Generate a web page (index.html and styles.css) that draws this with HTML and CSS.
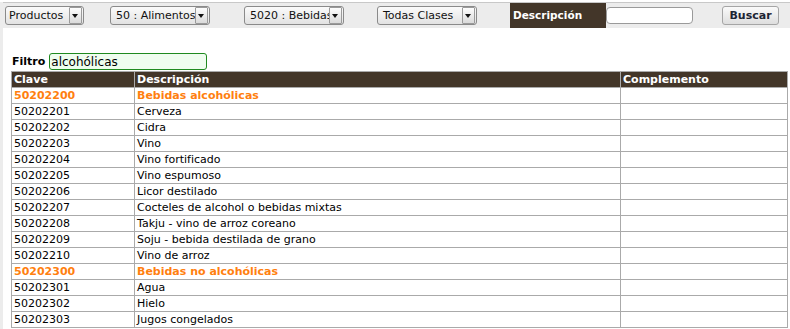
FILE: index.html
```html
<!DOCTYPE html>
<html lang="es">
<head>
    <meta charset="UTF-8">
    <title>Catálogo de productos</title>
    <link rel="stylesheet" href="styles.css">
</head>
<body>
    <div class="page">
        <div class="toolbar">
            <span class="combo w-prod"><span class="combo-text">Productos</span><span class="combo-btn"></span></span>
            <span class="combo w-seg"><span class="combo-text">50 : Alimentos</span><span class="combo-btn"></span></span>
            <span class="combo w-fam"><span class="combo-text">5020 : Bebidas</span><span class="combo-btn"></span></span>
            <span class="combo w-cla"><span class="combo-text">Todas Clases</span><span class="combo-btn"></span></span>
            <span class="search-label">Descripción</span>
            <input type="text" class="search-input">
            <button class="btn">Buscar</button>
        </div>

        <div class="content">
            <div class="filter">
                <label for="filtro">Filtro</label>
                <input type="text" id="filtro" value="alcohólicas">
            </div>

            <table class="grid">
                <thead>
                    <tr><th class="c1">Clave</th><th class="c2">Descripción</th><th class="c3">Complemento</th></tr>
                </thead>
                <tbody>
                    <tr class="group"><td>50202200</td><td>Bebidas alcohólicas</td><td></td></tr>
                    <tr><td>50202201</td><td>Cerveza</td><td></td></tr>
                    <tr><td>50202202</td><td>Cidra</td><td></td></tr>
                    <tr><td>50202203</td><td>Vino</td><td></td></tr>
                    <tr><td>50202204</td><td>Vino fortificado</td><td></td></tr>
                    <tr><td>50202205</td><td>Vino espumoso</td><td></td></tr>
                    <tr><td>50202206</td><td>Licor destilado</td><td></td></tr>
                    <tr><td>50202207</td><td>Cocteles de alcohol o bebidas mixtas</td><td></td></tr>
                    <tr><td>50202208</td><td>Takju - vino de arroz coreano</td><td></td></tr>
                    <tr><td>50202209</td><td>Soju - bebida destilada de grano</td><td></td></tr>
                    <tr><td>50202210</td><td>Vino de arroz</td><td></td></tr>
                    <tr class="group"><td>50202300</td><td>Bebidas no alcohólicas</td><td></td></tr>
                    <tr><td>50202301</td><td>Agua</td><td></td></tr>
                    <tr><td>50202302</td><td>Hielo</td><td></td></tr>
                    <tr><td>50202303</td><td>Jugos congelados</td><td></td></tr>
                </tbody>
            </table>
        </div>
    </div>
</body>
</html>
```

FILE: styles.css
```css
body {
    margin: 0;
    font-family: "DejaVu Sans", Verdana, sans-serif;
    font-size: 11px;
    color: #000;
    background: #fff;
}

.page {
    border-left: 3px solid #ececec;
    min-height: 100vh;
    box-sizing: border-box;
}

/* barra superior */
.toolbar {
    display: flex;
    align-items: center;
    height: 25px;
    margin-top: 2px;
    border-top: 1px solid #c8c8c8;
    background: #ececec;
    padding-left: 2px;
}

.combo {
    display: flex;
    align-items: center;
    box-sizing: border-box;
    height: 19px;
    border: 1px solid #8a8a8a;
    border-radius: 3px;
    background: linear-gradient(#fbfbfb, #e2e2e2);
    overflow: hidden;
}

.combo-text {
    flex: 1;
    padding-left: 5px;
    white-space: nowrap;
    overflow: hidden;
    color: #111;
}

.combo-btn {
    position: relative;
    width: 11px;
    height: 15px;
    margin-right: 1px;
    border: 1px solid #9a9a9a;
    border-radius: 1px;
    background: linear-gradient(#fdfdfd, #dadada);
    flex: none;
}

.combo-btn::after {
    content: "";
    position: absolute;
    left: 2px;
    top: 6px;
    border-left: 3px solid transparent;
    border-right: 3px solid transparent;
    border-top: 4px solid #111;
}

.w-prod { width: 79px; }
.w-prod .combo-text { padding-left: 3px; }
.w-seg { width: 100px; margin-left: 26px; }
.w-fam { width: 100px; margin-left: 34px; }
.w-cla { width: 100px; margin-left: 33px; }

.search-label {
    margin-left: 33px;
    width: 93px;
    height: 25px;
    line-height: 25px;
    padding-left: 3px;
    background: #433629;
    color: #fff;
    font-weight: bold;
    font-size: 10.5px;
}

.search-input {
    box-sizing: border-box;
    width: 87px;
    height: 17px;
    margin: 0;
    border: 1px solid #9a9a9a;
    border-radius: 4px;
    background: #fff;
}

.btn {
    box-sizing: border-box;
    margin-left: 29px;
    width: 57px;
    height: 19px;
    padding: 0;
    border: 1px solid #a5a5a5;
    border-radius: 3px;
    background: linear-gradient(#fafafa, #dedede);
    font-family: "DejaVu Sans", Verdana, sans-serif;
    font-size: 11px;
    font-weight: bold;
    color: #1c2433;
}

/* contenido */
.content {
    padding: 25px 0 0 8px;
}

.filter {
    display: flex;
    align-items: center;
    gap: 4px;
    margin-left: 1px;
}

.filter label {
    font-weight: bold;
}

.filter input {
    box-sizing: border-box;
    width: 158px;
    height: 17px;
    padding: 0 1px;
    margin: 0;
    border: 1px solid #1f8a1f;
    border-radius: 3px;
    background: #effdef;
    font-family: "DejaVu Sans", Verdana, sans-serif;
    font-size: 12px;
    color: #000;
}

.grid {
    width: 777px;
    margin-top: 1px;
    border-collapse: collapse;
}

.grid th,
.grid td {
    height: 15px;
    padding: 0 2px;
    border: 1px solid #aaaaaa;
    text-align: left;
    line-height: 15px;
    white-space: nowrap;
}

.grid th {
    background: #433629;
    color: #fff;
    font-weight: bold;
}

.grid .c1 { width: 118px; }
.grid .c2 { width: 481px; }

.grid .group td {
    color: #ff7f0f;
    font-weight: bold;
}
```
